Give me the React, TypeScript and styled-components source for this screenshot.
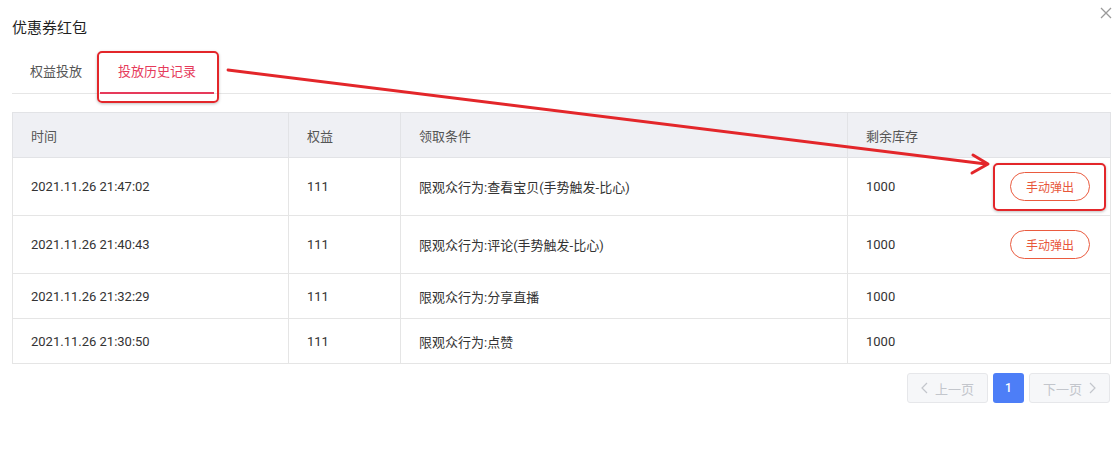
import styled, { createGlobalStyle } from "styled-components";

const GlobalStyle = createGlobalStyle`
  * {
    box-sizing: border-box;
  }
  body {
    margin: 0;
    background: #fff;
    font-family: Roboto, "Noto Sans CJK SC", sans-serif;
    color: #333;
  }
`;

const records = [
  { time: "2021.11.26 21:47:02", right: "111", cond: "限观众行为:查看宝贝(手势触发-比心)", stock: "1000", canPop: true },
  { time: "2021.11.26 21:40:43", right: "111", cond: "限观众行为:评论(手势触发-比心)", stock: "1000", canPop: true },
  { time: "2021.11.26 21:32:29", right: "111", cond: "限观众行为:分享直播", stock: "1000", canPop: false },
  { time: "2021.11.26 21:30:50", right: "111", cond: "限观众行为:点赞", stock: "1000", canPop: false },
];

const App = () => {
  return (
    <Page>
      <GlobalStyle />
      <Header>
        <Title>优惠券红包</Title>
        <Close aria-label="close">
          <svg width="12" height="12" viewBox="0 0 12 12">
            <path d="M1 1L11 11M11 1L1 11" stroke="#9a9a9a" strokeWidth="1.3" />
          </svg>
        </Close>
      </Header>

      <Tabs>
        <Tab>权益投放</Tab>
        <Tab $active>投放历史记录</Tab>
      </Tabs>

      <Table>
        <colgroup>
          <col style={{ width: 276 }} />
          <col style={{ width: 112 }} />
          <col style={{ width: 447 }} />
          <col />
        </colgroup>
        <thead>
          <tr>
            <Th>时间</Th>
            <Th>权益</Th>
            <Th>领取条件</Th>
            <Th>剩余库存</Th>
          </tr>
        </thead>
        <tbody>
          {records.map((r) => (
            <Row key={r.time} $tall={r.canPop}>
              <Td>{r.time}</Td>
              <Td>{r.right}</Td>
              <Td>{r.cond}</Td>
              <Td>
                <StockCell>
                  <span>{r.stock}</span>
                  {r.canPop && <PopButton>手动弹出</PopButton>}
                </StockCell>
              </Td>
            </Row>
          ))}
        </tbody>
      </Table>

      <Pager>
        <PageBtn disabled>
          <svg width="7" height="12" viewBox="0 0 7 12">
            <path d="M6 1L1 6L6 11" fill="none" stroke="#c3c6cc" strokeWidth="1.2" />
          </svg>
          上一页
        </PageBtn>
        <PageNum>1</PageNum>
        <PageBtn disabled>
          下一页
          <svg width="7" height="12" viewBox="0 0 7 12">
            <path d="M1 1L6 6L1 11" fill="none" stroke="#c3c6cc" strokeWidth="1.2" />
          </svg>
        </PageBtn>
      </Pager>

      <Mark style={{ left: 97, top: 51, width: 122, height: 52 }} />
      <Mark style={{ left: 993, top: 163, width: 113, height: 48 }} />
      <Arrow width="1119" height="472" viewBox="0 0 1119 472">
        <line x1="228" y1="70" x2="986" y2="164" stroke="#e3262a" strokeWidth="2.8" strokeLinecap="round" />
        <polyline
          points="973,155 988,164 972,173"
          fill="none"
          stroke="#e3262a"
          strokeWidth="3"
          strokeLinecap="round"
          strokeLinejoin="round"
        />
      </Arrow>
    </Page>
  );
};

const Page = styled.div`
  position: relative;
  width: 1119px;
  height: 472px;
  padding: 0 8px 0 12px;
  overflow: hidden;
`;

const Header = styled.div`
  display: flex;
  align-items: center;
  justify-content: space-between;
  height: 40px;
  padding-top: 12px;
`;

const Title = styled.h1`
  margin: 0;
  font-size: 15px;
  font-weight: 400;
  color: #1f1f1f;
  font-family: "Noto Sans CJK SC", sans-serif;
`;

const Close = styled.button`
  position: absolute;
  top: 7px;
  right: 7px;
  border: 0;
  background: none;
  padding: 0;
  width: 12px;
  height: 12px;
  display: flex;
`;

const Tabs = styled.div`
  display: flex;
  margin-top: 17px;
  border-bottom: 1px solid #e6e6e6;
`;

const Tab = styled.div<{ $active?: boolean }>`
  font-family: "Noto Sans CJK SC", sans-serif;
  font-size: 13px;
  padding: 4px 18px 12px;
  color: ${(p) => (p.$active ? "#e63a5b" : "#555")};
  border-bottom: 2px solid ${(p) => (p.$active ? "#e63a5b" : "transparent")};
  margin-bottom: -1px;
`;

const Table = styled.table`
  margin-top: 18px;
  width: 1099px;
  border-collapse: collapse;
  table-layout: fixed;
  font-size: 13px;
  border: 1px solid #e5e5e5;
`;

const Th = styled.th`
  height: 45px;
  background: #eff0f4;
  text-align: left;
  font-weight: 400;
  color: #555;
  padding: 0 18px;
  border: 1px solid #e2e3e6;
  font-family: "Noto Sans CJK SC", sans-serif;
`;

const Row = styled.tr<{ $tall?: boolean }>`
  height: ${(p) => (p.$tall ? "58px" : "45px")};
`;

const Td = styled.td`
  padding: 0 18px;
  border: 1px solid #e5e5e5;
  color: #333;
  font-family: Roboto, "Noto Sans CJK SC", sans-serif;
`;

const StockCell = styled.div`
  display: flex;
  align-items: center;
  justify-content: space-between;
`;

const PopButton = styled.button`
  width: 80px;
  height: 29px;
  border: 1px solid #ea5b3f;
  border-radius: 15px;
  background: #fff;
  color: #e8563a;
  font-size: 12px;
  font-family: "Noto Sans CJK SC", sans-serif;
  padding: 0;
  margin-right: 2px;
`;

const Pager = styled.div`
  display: flex;
  justify-content: flex-end;
  gap: 5px;
  margin-top: 9px;
  padding-right: 1px;
`;

const PageBtn = styled.button`
  width: 81px;
  height: 30px;
  border: 1px solid #e6e7ea;
  border-radius: 3px;
  background: #f6f7f9;
  color: #c3c6cc;
  font-size: 13px;
  font-family: "Noto Sans CJK SC", sans-serif;
  display: flex;
  align-items: center;
  justify-content: center;
  gap: 7px;
  padding: 0;
`;

const PageNum = styled.div`
  width: 31px;
  height: 30px;
  border-radius: 3px;
  background: #4d7ef7;
  color: #fff;
  font-size: 12px;
  font-weight: 500;
  display: flex;
  align-items: center;
  justify-content: center;
`;

const Mark = styled.div`
  position: absolute;
  border: 2.6px solid #e3262a;
  border-radius: 5px;
  box-shadow: 0 1px 3px rgba(0, 0, 0, 0.25);
  pointer-events: none;
`;

const Arrow = styled.svg`
  position: absolute;
  left: 0;
  top: 0;
  pointer-events: none;
`;

export default App;
